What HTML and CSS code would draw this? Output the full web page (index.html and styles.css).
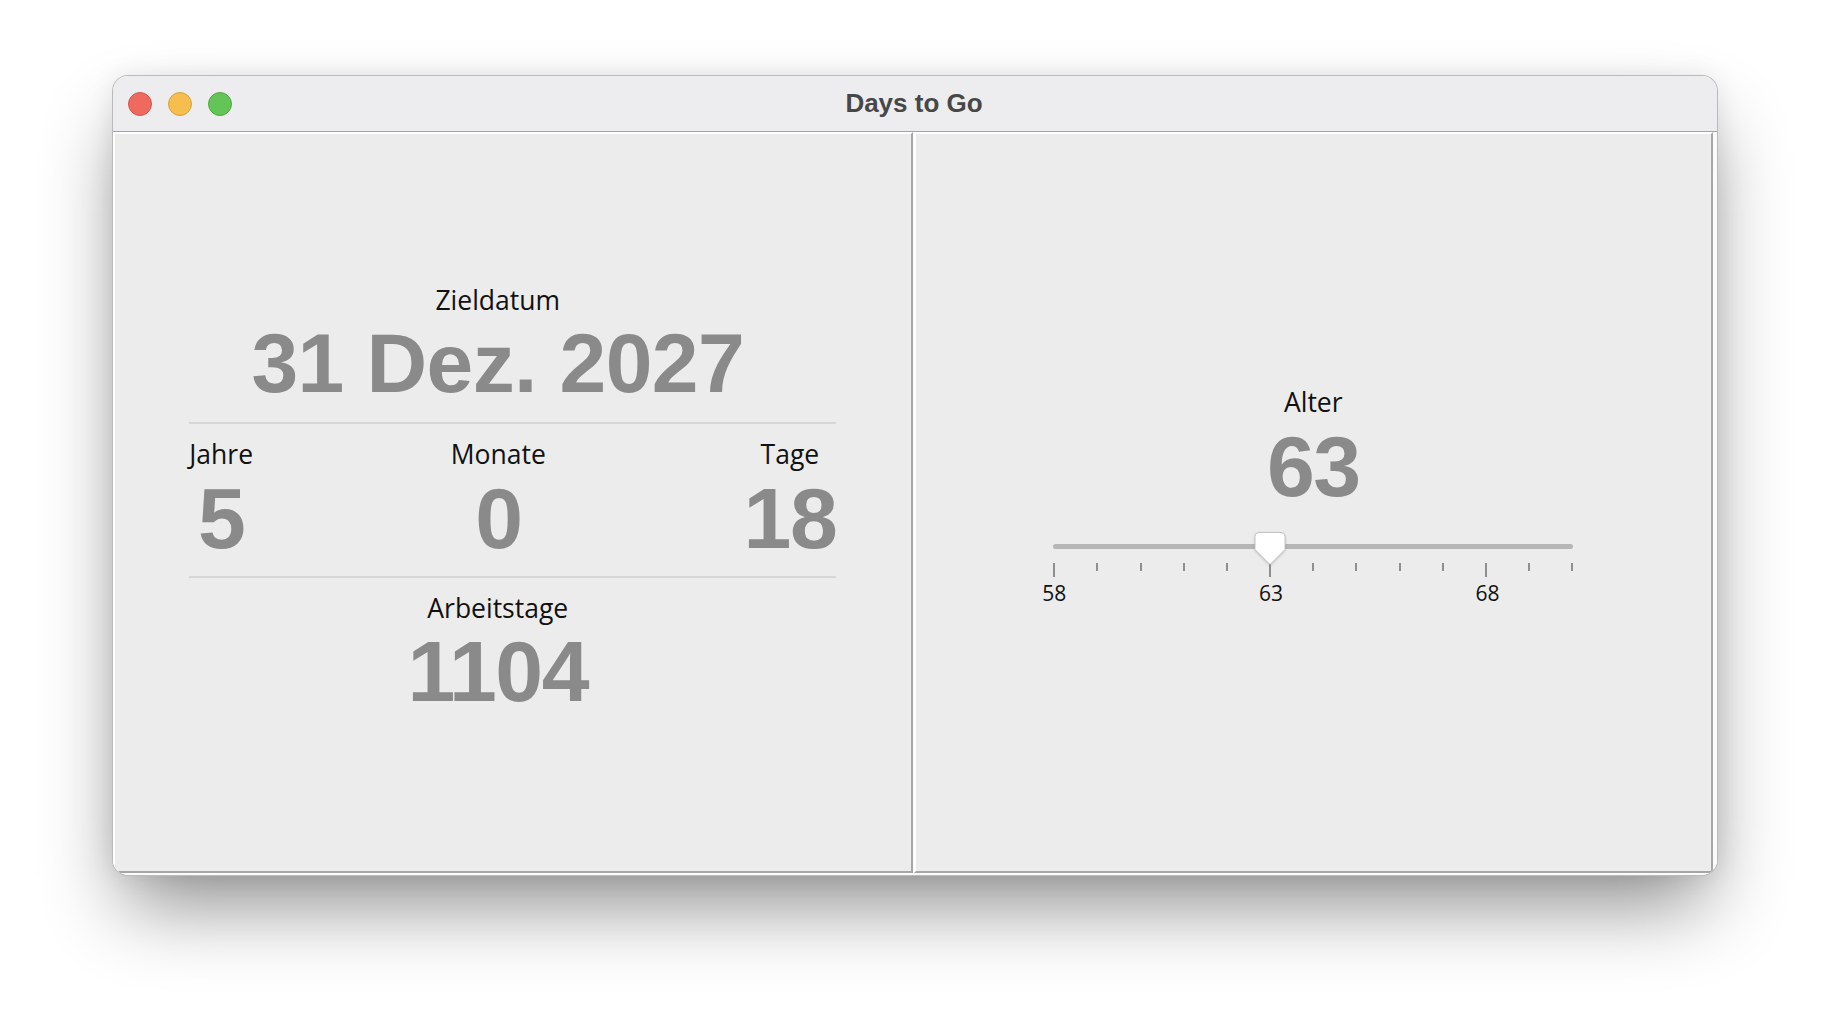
FILE: index.html
```html
<!DOCTYPE html>
<html lang="de">
<head>
<meta charset="utf-8">
<title>Days to Go</title>
<link rel="stylesheet" href="styles.css">
</head>
<body>
<div class="window">
  <div class="titlebar">
    <div class="lights">
      <span class="light red"></span>
      <span class="light yellow"></span>
      <span class="light green"></span>
    </div>
    <div class="title">Days to Go</div>
    <div class="spacer"></div>
  </div>
  <div class="body">
    <section class="panel panel-left">
      <div class="summary">
        <div class="label wide">Zieldatum</div>
        <div class="value wide date">31 Dez. 2027</div>
        <div class="sep sep-top"></div>
        <div class="cell">
          <div class="label">Jahre</div>
          <div class="value num">5</div>
        </div>
        <div class="cell">
          <div class="label">Monate</div>
          <div class="value num">0</div>
        </div>
        <div class="cell">
          <div class="label">Tage</div>
          <div class="value num">18</div>
        </div>
        <div class="sep sep-bottom"></div>
        <div class="label wide work-label">Arbeitstage</div>
        <div class="value wide num work-value">1104</div>
      </div>
    </section>
    <section class="panel panel-right">
      <div class="age">
        <div class="label">Alter</div>
        <div class="value num">63</div>
        <div class="slider">
          <div class="track"></div>
          <svg class="thumb" width="34" height="38" viewBox="0 0 34 38">
            <path d="M6 2.5 H28 Q32 2.5 32 6.5 V19.5 L17 34.5 L2 19.5 V6.5 Q2 2.5 6 2.5 Z" fill="#ffffff" stroke="#c4c4c4" stroke-width="1"/>
          </svg>
          <div class="ticks">
            <span class="tick major"></span><span class="tick"></span><span class="tick"></span><span class="tick"></span><span class="tick"></span>
            <span class="tick major"></span><span class="tick"></span><span class="tick"></span><span class="tick"></span><span class="tick"></span>
            <span class="tick major"></span><span class="tick"></span><span class="tick"></span>
          </div>
          <div class="scale">
            <span class="mark m58">58</span>
            <span class="mark m63">63</span>
            <span class="mark m68">68</span>
          </div>
        </div>
      </div>
    </section>
  </div>
</div>
</body>
</html>
```

FILE: styles.css
```css
* { box-sizing: border-box; }

html, body {
  margin: 0;
  background: #ffffff;
}

body {
  padding: 75px 0 0 112px;
  width: 1830px;
  height: 1024px;
  overflow: hidden;
  font-family: "Open Sans", "Noto Sans", sans-serif;
}

.window {
  width: 1606px;
  height: 801px;
  border: 1px solid rgba(0, 0, 0, 0.26);
  border-radius: 16px;
  overflow: hidden;
  background: #fbfbfb;
  box-shadow: 0 40px 80px -12px rgba(0, 0, 0, 0.45), 0 0 24px rgba(0, 0, 0, 0.08);
  display: flex;
  flex-direction: column;
}

.titlebar {
  height: 56px;
  flex: 0 0 56px;
  background: #ededef;
  border-bottom: 1px solid #a3a3a3;
  display: grid;
  grid-template-columns: 1fr auto 1fr;
  align-items: center;
}

.lights {
  display: flex;
  gap: 16px;
  padding-left: 15px;
}

.light {
  width: 24px;
  height: 24px;
  border-radius: 50%;
  display: block;
}
.red { background: #ee6a5f; border: 1px solid #d5574c; }
.yellow { background: #f5be4f; border: 1px solid #d9a13f; }
.green { background: #62c555; border: 1px solid #52a842; }

.title {
  font-family: "Liberation Sans", Arial, sans-serif;
  font-weight: bold;
  font-size: 26px;
  color: #474747;
  padding-right: 2px;
}

.body {
  flex: 1;
  display: flex;
  gap: 1px;
  padding: 0 4px 2px 0;
  background: #fbfbfb;
}

.panel {
  flex: 1;
  background: #ececec;
  border-top: 2px solid #ffffff;
  border-left: 2px solid #ffffff;
  border-right: 2px solid #a6a6a6;
  border-bottom: 2px solid #a6a6a6;
}

.panel-left { padding-top: 148px; }
.panel-right { padding-top: 250px; }

.label {
  font-family: "Open Sans", "Noto Sans", sans-serif;
  font-size: 26.5px;
  line-height: 36px;
  color: #111111;
}

.value {
  font-family: "Liberation Sans", Arial, sans-serif;
  font-weight: bold;
  color: #8a8a8a;
}

.num {
  font-size: 86px;
  line-height: 86px;
  margin-top: 3px;
  letter-spacing: -1.5px;
}

.date {
  font-size: 84px;
  line-height: 84px;
  margin-top: 3px;
  letter-spacing: -0.6px;
}

.summary {
  width: 647px;
  margin: 0 auto;
  display: grid;
  grid-template-columns: auto minmax(0, 1fr) auto;
}

.wide {
  grid-column: 1 / -1;
  text-align: center;
  padding-right: 30px;
  white-space: nowrap;
}

.sep {
  grid-column: 1 / -1;
  height: 2px;
  background: #d7d7d7;
}
.sep-top { margin-top: 17px; }
.sep-bottom { margin-top: 15px; }

.cell {
  margin-top: 12px;
  display: flex;
  flex-direction: column;
  align-items: center;
}

.work-label { margin-top: 12px; }
.work-value { margin-top: 2px; }

.age {
  display: flex;
  flex-direction: column;
  align-items: center;
}

.slider {
  position: relative;
  width: 520px;
  margin-top: 23px;
  padding-top: 12px;
}

.track {
  height: 5px;
  border-radius: 3px;
  background: #b6b6b6;
}

.thumb {
  position: absolute;
  top: -2px;
  left: 200px;
  filter: drop-shadow(0 1px 1px rgba(0, 0, 0, 0.18));
}

.ticks {
  margin-top: 14px;
  height: 14px;
  display: flex;
  justify-content: space-between;
  align-items: flex-start;
}

.tick {
  display: block;
  width: 2px;
  height: 8px;
  background: #8f8f8f;
}
.tick.major { height: 14px; }

.scale {
  margin-top: 2px;
  margin-left: -20.67px;
  width: 563.33px;
  display: grid;
  grid-template-columns: repeat(13, 1fr);
  font-family: "Open Sans", "Noto Sans", sans-serif;
  font-size: 21px;
  line-height: 28px;
  color: #111111;
}

.mark { text-align: center; }
.m58 { grid-column: 1; }
.m63 { grid-column: 6; }
.m68 { grid-column: 11; }
```
